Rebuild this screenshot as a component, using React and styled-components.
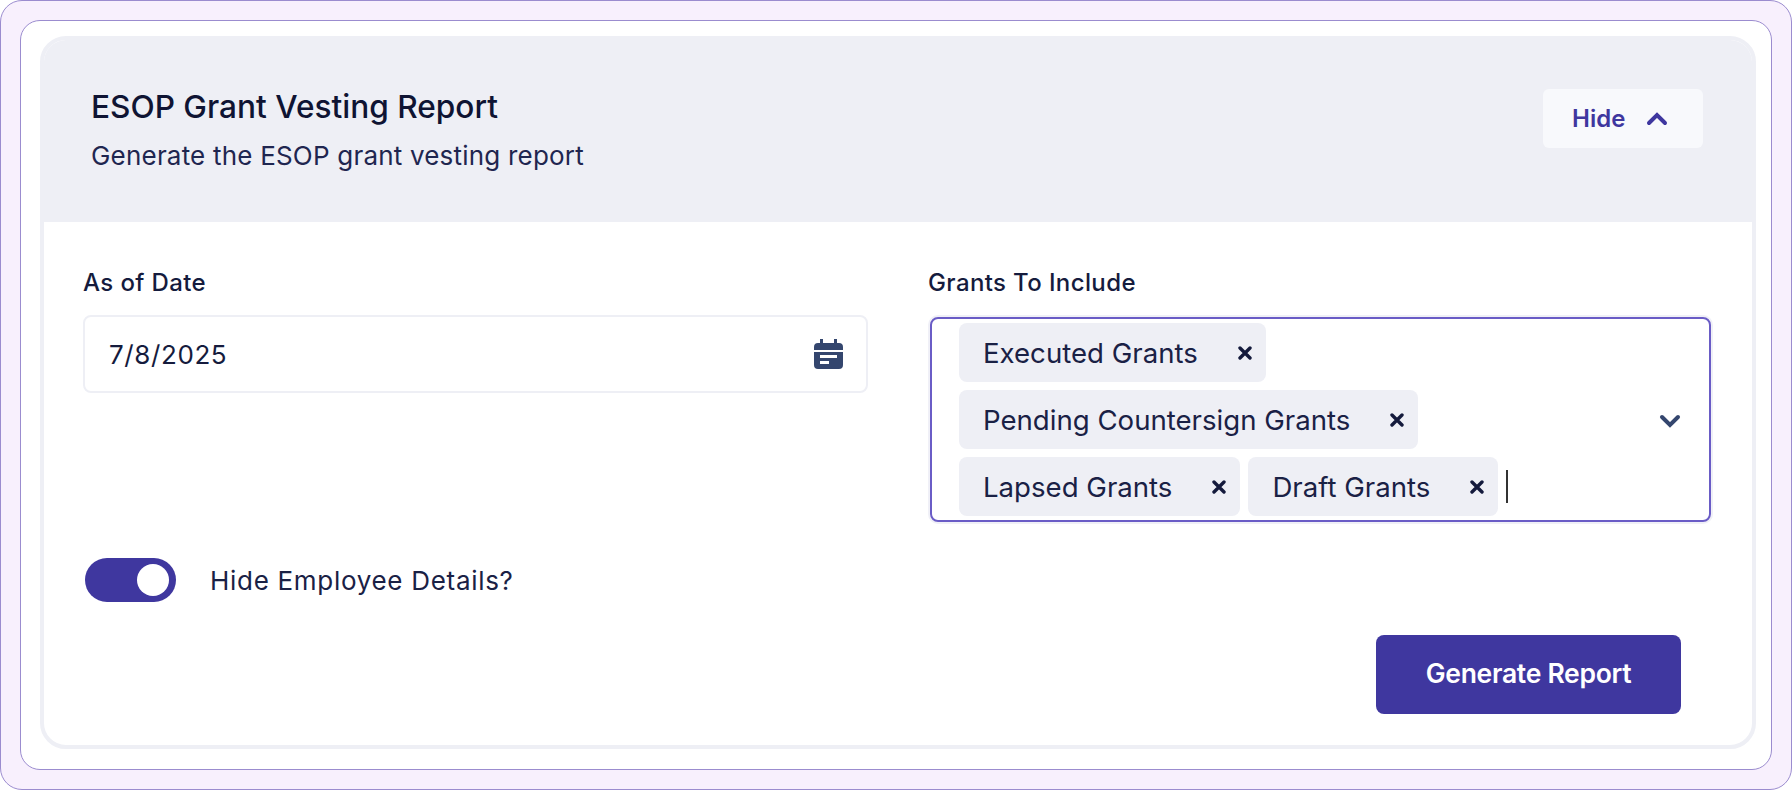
import React from "react";
import styled, { createGlobalStyle } from "styled-components";

const GlobalStyle = createGlobalStyle`
  html, body {
    margin: 0;
    padding: 0;
    background: #ffffff;
    overflow: hidden;
  }
  * {
    box-sizing: border-box;
  }
`;

const Frame = styled.div`
  width: 1792px;
  height: 790px;
  padding: 19px;
  background: #f8f0fd;
  border: 1px solid #9b8ccf;
  border-radius: 22px;
  font-family: Inter, "Liberation Sans", sans-serif;
  color: #151b3d;
`;

const Panel = styled.div`
  height: 100%;
  padding: 15px 15px 20px 19px;
  background: #ffffff;
  border: 1px solid #9b8ccf;
  border-radius: 20px;
`;

const Card = styled.section`
  height: 100%;
  display: flex;
  flex-direction: column;
  background: #ffffff;
  border: 4px solid #eeeff5;
  border-radius: 26px;
  overflow: hidden;
`;

const Header = styled.header`
  height: 182px;
  flex-shrink: 0;
  display: flex;
  justify-content: space-between;
  align-items: flex-start;
  padding: 49px 49px 0 47px;
  background: #eeeff5;
`;

const Heading = styled.div`
  display: flex;
  flex-direction: column;
  gap: 15px;
`;

const Title = styled.h1`
  margin: 0;
  font-size: 31.6px;
  line-height: 36px;
  font-weight: 500;
  color: #0f1433;
`;

const Subtitle = styled.p`
  margin: 0;
  font-size: 26px;
  line-height: 32px;
  font-weight: 400;
  letter-spacing: 0.2px;
  color: #1f2650;
`;

const HideButton = styled.button`
  width: 160px;
  height: 59px;
  display: flex;
  align-items: center;
  gap: 21px;
  padding: 0 0 0 29px;
  border: 0;
  border-radius: 6px;
  background: #f8f9fc;
  color: #3f379f;
  font-family: inherit;
  font-size: 24px;
  font-weight: 600;
  cursor: pointer;
`;

const Body = styled.div`
  flex: 1;
  display: flex;
  flex-direction: column;
  padding: 47px 42px 0 39px;
`;

const Fields = styled.div`
  display: grid;
  grid-template-columns: 785px 783px;
  column-gap: 60px;
  align-items: start;
`;

const Field = styled.div`
  display: flex;
  flex-direction: column;
  gap: 18px;
`;

const Label = styled.label`
  font-size: 24px;
  line-height: 28px;
  font-weight: 450;
  letter-spacing: 0.38px;
  color: #151b3d;
`;

const DateBox = styled.div`
  height: 78px;
  display: flex;
  align-items: center;
  justify-content: space-between;
  padding: 0 23px 0 24px;
  border: 2px solid #eeeff5;
  border-radius: 8px;
  font-size: 26px;
  letter-spacing: 0.6px;
  color: #151b3d;
`;

const SelectBox = styled.div`
  height: 205px;
  margin: 2px 0 0 2px;
  display: flex;
  align-items: center;
  justify-content: space-between;
  padding: 0 28px 0 27px;
  border: 2px solid #6a5cc6;
  border-radius: 8px;
  box-shadow: 0 0 0 2px #f0f0f7;
`;

const Chips = styled.div`
  display: flex;
  flex-wrap: wrap;
  align-items: center;
  gap: 8px;
  width: 600px;
`;

const Chip = styled.div`
  height: 59px;
  display: flex;
  align-items: center;
  gap: 40px;
  padding: 0 14px 0 24px;
  border-radius: 8px;
  background: #eeeff5;
  font-size: 27.6px;
  color: #1a2145;
`;

const Caret = styled.span`
  width: 2px;
  height: 33px;
  background: #333333;
`;

const DropdownArrow = styled.span`
  display: flex;
  margin-top: 4px;
`;

const ToggleRow = styled.div`
  display: flex;
  align-items: center;
  gap: 34px;
  margin-top: 36px;
  margin-left: 2px;
`;

const Toggle = styled.div`
  width: 91px;
  height: 44px;
  display: flex;
  align-items: center;
  justify-content: flex-end;
  padding-right: 7px;
  border-radius: 22px;
  background: #3f379f;
`;

const Knob = styled.span`
  width: 32px;
  height: 32px;
  border-radius: 50%;
  background: #ffffff;
`;

const ToggleText = styled.span`
  font-size: 26px;
  letter-spacing: 0.7px;
  color: #1a2145;
`;

const Footer = styled.div`
  display: flex;
  justify-content: flex-end;
  margin-top: 33px;
  padding-right: 29px;
`;

const GenerateButton = styled.button`
  width: 305px;
  height: 79px;
  padding: 0 0 3px;
  border: 0;
  border-radius: 8px;
  background: #3f379f;
  color: #ffffff;
  font-family: inherit;
  font-size: 26.5px;
  font-weight: 600;
  letter-spacing: -0.3px;
  cursor: pointer;
`;

function Chevron({ up, color }) {
  return (
    <svg width="22" height="15" viewBox="0 0 22 15" fill="none">
      <path
        d={up ? "M3 12L11 4L19 12" : "M3 3L11 11L19 3"}
        stroke={color}
        strokeWidth="4"
        strokeLinecap="round"
        strokeLinejoin="miter"
      />
    </svg>
  );
}

function CloseIcon() {
  return (
    <svg width="14" height="14" viewBox="0 0 14 14" fill="none">
      <path d="M2 2L12 12M12 2L2 12" stroke="#141a3c" strokeWidth="3.4" strokeLinecap="round" />
    </svg>
  );
}

function CalendarIcon() {
  return (
    <svg width="29" height="30" viewBox="0 0 29 30">
      <path
        fill="#34466e"
        d="M6 0h3v4h11V0h3v4h2a4 4 0 0 1 4 4v3H0V8a4 4 0 0 1 4-4h2z"
      />
      <path
        fill="#34466e"
        fillRule="evenodd"
        d="M0 13h29v13a4 4 0 0 1-4 4H4a4 4 0 0 1-4-4zM6 16v3h17v-3zM6 22v3h9v-3z"
      />
    </svg>
  );
}

export default function App() {
  return (
    <>
      <GlobalStyle />
      <Frame>
        <Panel>
          <Card>
            <Header>
              <Heading>
                <Title>ESOP Grant Vesting Report</Title>
                <Subtitle>Generate the ESOP grant vesting report</Subtitle>
              </Heading>
              <HideButton>
                Hide
                <Chevron up color="#3f379f" />
              </HideButton>
            </Header>
            <Body>
              <Fields>
                <Field>
                  <Label>As of Date</Label>
                  <DateBox>
                    7/8/2025
                    <CalendarIcon />
                  </DateBox>
                </Field>
                <Field>
                  <Label>Grants To Include</Label>
                  <SelectBox>
                    <Chips>
                      <Chip>
                        Executed Grants
                        <CloseIcon />
                      </Chip>
                      <Chip>
                        Pending Countersign Grants
                        <CloseIcon />
                      </Chip>
                      <Chip>
                        Lapsed Grants
                        <CloseIcon />
                      </Chip>
                      <Chip>
                        Draft Grants
                        <CloseIcon />
                      </Chip>
                      <Caret />
                    </Chips>
                    <DropdownArrow>
                      <Chevron color="#34466e" />
                    </DropdownArrow>
                  </SelectBox>
                </Field>
              </Fields>
              <ToggleRow>
                <Toggle>
                  <Knob />
                </Toggle>
                <ToggleText>Hide Employee Details?</ToggleText>
              </ToggleRow>
              <Footer>
                <GenerateButton>Generate Report</GenerateButton>
              </Footer>
            </Body>
          </Card>
        </Panel>
      </Frame>
    </>
  );
}
